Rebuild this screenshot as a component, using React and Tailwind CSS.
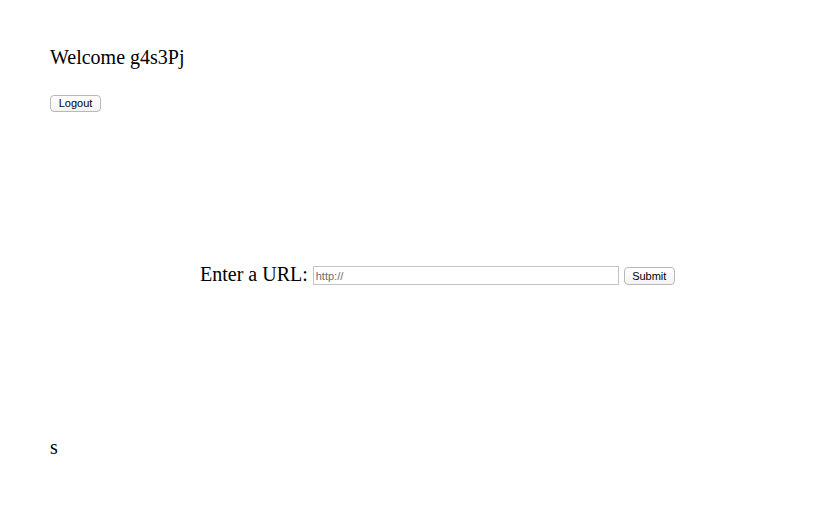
export default function App() {
  const serif = { fontFamily: '"Liberation Serif", "Times New Roman", serif' };
  return (
    <div className="w-[830px] h-[522px] bg-white text-black relative" style={serif}>
      <div className="pl-[50px] pt-[45px]">
        <div className="text-[20px] leading-[24px]">Welcome g4s3Pj</div>
        <div className="mt-[21px]">
          <button className="h-[17px] w-[51px] border border-[#b8b8b8] rounded-[4px] bg-gradient-to-b from-white to-[#f3f3f3] text-[11px] leading-[15px] font-['Liberation_Sans',sans-serif] text-black">
            Logout
          </button>
        </div>
      </div>
      <div className="flex items-center pl-[200px] mt-[148px]">
        <span className="text-[20px] leading-[24px] mb-[3px]">Enter a URL:</span>
        <input
          className="ml-[5px] w-[306px] h-[19px] border border-[#c4c4c4] px-[2px] text-[11px] font-['Liberation_Sans',sans-serif] placeholder:text-[#6e6e6e] outline-none"
          placeholder="http://"
        />
        <button className="ml-[5px] h-[18px] w-[51px] border border-[#b8b8b8] rounded-[4px] bg-gradient-to-b from-white to-[#f3f3f3] text-[11px] leading-[15px] font-['Liberation_Sans',sans-serif] text-black mt-[1px]">
          Submit
        </button>
      </div>
      <div className="pl-[50px] mt-[146px] text-[20px] leading-[24px]">s</div>
    </div>
  );
}
